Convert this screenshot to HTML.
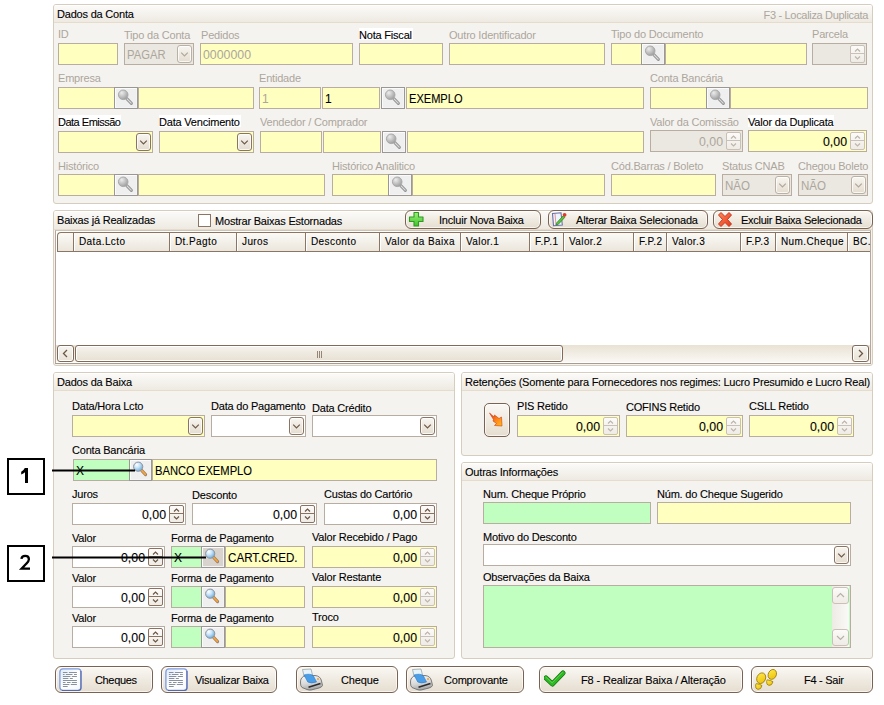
<!DOCTYPE html><html><head><meta charset="utf-8"><style>
*{margin:0;padding:0;box-sizing:border-box}
html,body{width:884px;height:705px;overflow:hidden;background:#fff;font-family:"Liberation Sans",sans-serif}
.t{position:absolute;white-space:nowrap;font-family:"Liberation Sans",sans-serif}
.k{-webkit-text-stroke:0.1px currentColor}
.b{position:absolute}
.grp{position:absolute;border:1px solid #d6cdbd;border-radius:3px;background:#f5f3ef;overflow:hidden;z-index:0}
.ghdr{position:absolute;left:0;top:0;right:0;border-top:1px solid #fff;border-bottom:1px solid #e6dccb;background:linear-gradient(#fbfaf8,#eeeae2)}
.dd{position:absolute;width:15px;height:18px;border:1px solid #7b6352;border-radius:3px;background:linear-gradient(#f8f6f1,#e4dccf);box-shadow:inset 0 0 0 1px rgba(255,255,255,0.75);z-index:3}
.dd svg{position:absolute;left:0;top:0}
.sp{position:absolute;width:15px;height:18px;border:1px solid #c9c1b8;border-radius:2px;background:linear-gradient(#fcfbf9,#efebe5);z-index:3}
.sp1{position:absolute;left:0;top:0;width:13px;height:8px;border-bottom:1px solid #c9c1b8}
.sb{position:absolute;border:1px solid #9b9794;box-shadow:inset 1px 1px 0 #fbfbfb,inset -1px -1px 0 #f4f4f4;z-index:3}
.sb svg{position:absolute;left:1px;top:0px}
.rb{position:absolute;border:1px solid #7a6352;border-radius:6px;background:linear-gradient(#faf8f4,#e5ddcf);box-shadow:inset 0 0 0 1px rgba(255,255,255,0.7);z-index:3}
.cb{position:absolute;width:13px;height:13px;border:1px solid #8b7565;background:#fff;z-index:3}
.grid{position:absolute;border:1px solid #b5a799;border-top-color:#cfc5b5;border-bottom-color:#a99b8d;background:#fff;z-index:2}
.ghrow{position:absolute;border:1px solid #8b7565;border-right:none;border-top-left-radius:4px;background:linear-gradient(#fbfaf6,#ebe6dc);z-index:3}
.gdiv{position:absolute;width:2px;height:18px;border-left:1px solid #8b7565;border-right:1px solid #fff;z-index:4}
.sbar{position:absolute;background:linear-gradient(#e9e2d4,#faf8f4);z-index:3}
.sbb{position:absolute;width:17px;height:17px;border:1px solid #806a5a;border-radius:3px;background:linear-gradient(#f7f5f0,#e8e1d6);box-shadow:inset 0 0 0 1px #fff;z-index:4}
.sbb svg,.vsbb svg{position:absolute;left:0;top:0}
.sbt{position:absolute;border:1px solid #806a5a;border-radius:3px;background:linear-gradient(#f6f3ed,#e7e0d3);box-shadow:inset 0 0 0 1px #fff;z-index:4}
.vsb{position:absolute;background:linear-gradient(90deg,#eeeae4,#fbfaf8);z-index:3}
.vsbb{position:absolute;width:17px;height:17px;border:1px solid #c9c1b8;border-radius:3px;background:linear-gradient(#fcfbf9,#efebe5);z-index:4}
.ann{position:absolute;width:38px;height:37px;border:2px solid #000;background:#fff;z-index:6}
.ln{position:absolute;left:0;top:0;z-index:10}
</style></head><body>
<div class="grp" style="left:53px;top:4px;width:820px;height:200px"><div class="ghdr" style="height:18px"></div></div>
<div class="t k" style="top:7.00px;font-size:11px;line-height:14px;color:#000;letter-spacing:-0.200px;left:57px;z-index:5;">Dados da Conta</div>
<div class="t" style="top:8.00px;font-size:11px;line-height:14px;color:#aca69d;letter-spacing:-0.315px;left:763.50px;z-index:5;">F3 - Localiza Duplicata</div>
<div class="t" style="top:27.00px;font-size:11px;line-height:14px;color:#aca69d;letter-spacing:-0.200px;left:58px;z-index:5;">ID</div>
<div class="t" style="top:28.00px;font-size:11px;line-height:14px;color:#aca69d;letter-spacing:-0.200px;left:124px;z-index:5;">Tipo da Conta</div>
<div class="t" style="top:28.00px;font-size:11px;line-height:14px;color:#aca69d;letter-spacing:-0.200px;left:201px;z-index:5;">Pedidos</div>
<div class="t k" style="top:28.00px;font-size:11px;line-height:14px;color:#000;letter-spacing:-0.200px;background:#fff;height:12px;padding-right:1px;left:359px;z-index:5;">Nota Fiscal</div>
<div class="t" style="top:28.00px;font-size:11px;line-height:14px;color:#aca69d;letter-spacing:-0.200px;left:449px;z-index:5;">Outro Identificador</div>
<div class="t" style="top:27.00px;font-size:11px;line-height:14px;color:#aca69d;letter-spacing:-0.200px;left:611px;z-index:5;">Tipo do Documento</div>
<div class="t" style="top:27.00px;font-size:11px;line-height:14px;color:#aca69d;letter-spacing:-0.200px;left:812px;z-index:5;">Parcela</div>
<div class="b" style="left:58px;top:43px;width:60px;height:22px;background:#ffffc0;border:1px solid #b9aca0;z-index:1;"></div>
<div class="b" style="left:124px;top:43px;width:70px;height:22px;background:#ebe8e1;border:1px solid #b9aca0;z-index:1;"></div>
<div class="dd" style="left:177px;top:45px;border-color:#b9b0a6"><svg width="13" height="16" viewBox="0 0 13 16"><path d="M3.2 6.6 L6.5 9.9 L9.8 6.6" fill="none" stroke="#b0a79d" stroke-width="1.25"/></svg></div>
<div class="t" style="top:47.50px;font-size:12px;line-height:15px;color:#aca69d;letter-spacing:0.000px;left:127px;z-index:5;transform:scaleX(0.9365);transform-origin:0 0;">PAGAR</div>
<div class="b" style="left:200px;top:43px;width:153px;height:22px;background:#ffffc0;border:1px solid #b9aca0;z-index:1;"></div>
<div class="t" style="top:47.50px;font-size:12px;line-height:15px;color:#aca69d;letter-spacing:0.000px;left:203px;z-index:5;transform:scaleX(1.0278);transform-origin:0 0;">0000000</div>
<div class="b" style="left:359px;top:43px;width:84px;height:22px;background:#ffffc0;border:1px solid #b9aca0;z-index:1;"></div>
<div class="b" style="left:449px;top:43px;width:156px;height:22px;background:#ffffc0;border:1px solid #b9aca0;z-index:1;"></div>
<div class="b" style="left:611px;top:43px;width:31px;height:22px;background:#ffffc0;border:1px solid #b9aca0;z-index:1;"></div>
<div class="sb" style="left:641px;top:43px;width:24px;height:22px;background:#efefef"><svg width="22" height="20" viewBox="0 0 22 20"><defs><radialGradient id="mg" cx="35%" cy="30%" r="75%"><stop offset="0" stop-color="#ececec"/><stop offset="1" stop-color="#9c9c9c"/></radialGradient></defs>
<path d="M10.8 10.6 L15.4 15.4" stroke="#949494" stroke-width="3" stroke-linecap="round"/><path d="M11 10.8 L15.2 15.2" stroke="#dcdcdc" stroke-width="1.1" stroke-linecap="round"/>
<circle cx="7.2" cy="6.8" r="4.8" fill="url(#mg)" stroke="#a6a6a6" stroke-width="0.9"/></svg></div>
<div class="b" style="left:665px;top:43px;width:142px;height:22px;background:#ffffc0;border:1px solid #b9aca0;z-index:1;"></div>
<div class="b" style="left:812px;top:43px;width:55px;height:22px;background:#ebe8e1;border:1px solid #b9aca0;z-index:1;"></div>
<div class="sp" style="left:850px;top:45px;border-color:#c9c1b8"><div class="sp1" style="border-bottom-color:#c9c1b8"></div><svg width="13" height="16" viewBox="0 0 13 16" style="position:absolute;left:0;top:0"><path d="M4 5.5 L6.5 3 L9 5.5" fill="none" stroke="#bdb5ab" stroke-width="1.2"/><path d="M4 10.5 L6.5 13 L9 10.5" fill="none" stroke="#bdb5ab" stroke-width="1.2"/></svg></div>
<div class="t" style="top:71.00px;font-size:11px;line-height:14px;color:#aca69d;letter-spacing:-0.200px;left:58px;z-index:5;">Empresa</div>
<div class="t" style="top:71.00px;font-size:11px;line-height:14px;color:#aca69d;letter-spacing:-0.200px;left:259px;z-index:5;">Entidade</div>
<div class="t" style="top:71.00px;font-size:11px;line-height:14px;color:#aca69d;letter-spacing:-0.200px;left:650px;z-index:5;">Conta Bancária</div>
<div class="b" style="left:58px;top:87px;width:57px;height:22px;background:#ffffc0;border:1px solid #b9aca0;z-index:1;"></div>
<div class="sb" style="left:114px;top:87px;width:24px;height:22px;background:#efefef"><svg width="22" height="20" viewBox="0 0 22 20"><defs><radialGradient id="mg" cx="35%" cy="30%" r="75%"><stop offset="0" stop-color="#ececec"/><stop offset="1" stop-color="#9c9c9c"/></radialGradient></defs>
<path d="M10.8 10.6 L15.4 15.4" stroke="#949494" stroke-width="3" stroke-linecap="round"/><path d="M11 10.8 L15.2 15.2" stroke="#dcdcdc" stroke-width="1.1" stroke-linecap="round"/>
<circle cx="7.2" cy="6.8" r="4.8" fill="url(#mg)" stroke="#a6a6a6" stroke-width="0.9"/></svg></div>
<div class="b" style="left:138px;top:87px;width:116px;height:22px;background:#ffffc0;border:1px solid #b9aca0;z-index:1;"></div>
<div class="b" style="left:259px;top:87px;width:62px;height:22px;background:#ffffc0;border:1px solid #b9aca0;z-index:1;"></div>
<div class="t" style="top:91.50px;font-size:12px;line-height:15px;color:#aca69d;letter-spacing:0.000px;left:262px;z-index:5;">1</div>
<div class="b" style="left:322px;top:87px;width:58px;height:22px;background:#ffffc0;border:1px solid #b9aca0;z-index:1;"></div>
<div class="t k" style="top:91.50px;font-size:12px;line-height:15px;color:#000;letter-spacing:0.000px;left:325px;z-index:5;">1</div>
<div class="sb" style="left:381px;top:87px;width:24px;height:22px;background:#efefef"><svg width="22" height="20" viewBox="0 0 22 20"><defs><radialGradient id="mg" cx="35%" cy="30%" r="75%"><stop offset="0" stop-color="#ececec"/><stop offset="1" stop-color="#9c9c9c"/></radialGradient></defs>
<path d="M10.8 10.6 L15.4 15.4" stroke="#949494" stroke-width="3" stroke-linecap="round"/><path d="M11 10.8 L15.2 15.2" stroke="#dcdcdc" stroke-width="1.1" stroke-linecap="round"/>
<circle cx="7.2" cy="6.8" r="4.8" fill="url(#mg)" stroke="#a6a6a6" stroke-width="0.9"/></svg></div>
<div class="b" style="left:406px;top:87px;width:238px;height:22px;background:#ffffc0;border:1px solid #b9aca0;z-index:1;"></div>
<div class="t k" style="top:91.50px;font-size:12px;line-height:15px;color:#000;letter-spacing:0.000px;left:409px;z-index:5;transform:scaleX(0.9224);transform-origin:0 0;">EXEMPLO</div>
<div class="b" style="left:650px;top:87px;width:57px;height:22px;background:#ffffc0;border:1px solid #b9aca0;z-index:1;"></div>
<div class="sb" style="left:706px;top:87px;width:24px;height:22px;background:#efefef"><svg width="22" height="20" viewBox="0 0 22 20"><defs><radialGradient id="mg" cx="35%" cy="30%" r="75%"><stop offset="0" stop-color="#ececec"/><stop offset="1" stop-color="#9c9c9c"/></radialGradient></defs>
<path d="M10.8 10.6 L15.4 15.4" stroke="#949494" stroke-width="3" stroke-linecap="round"/><path d="M11 10.8 L15.2 15.2" stroke="#dcdcdc" stroke-width="1.1" stroke-linecap="round"/>
<circle cx="7.2" cy="6.8" r="4.8" fill="url(#mg)" stroke="#a6a6a6" stroke-width="0.9"/></svg></div>
<div class="b" style="left:730px;top:87px;width:138px;height:22px;background:#ffffc0;border:1px solid #b9aca0;z-index:1;"></div>
<div class="t k" style="top:115.00px;font-size:11px;line-height:14px;color:#000;letter-spacing:-0.500px;background:#fff;height:12px;padding-right:1px;left:58px;z-index:5;">Data Emissão</div>
<div class="t k" style="top:115.00px;font-size:11px;line-height:14px;color:#000;letter-spacing:-0.200px;background:#fff;height:12px;padding-right:1px;left:159px;z-index:5;">Data Vencimento</div>
<div class="t" style="top:115.00px;font-size:11px;line-height:14px;color:#aca69d;letter-spacing:-0.200px;left:260px;z-index:5;">Vendedor / Comprador</div>
<div class="t" style="top:115.00px;font-size:11px;line-height:14px;color:#aca69d;letter-spacing:-0.200px;left:650px;z-index:5;">Valor da Comissão</div>
<div class="t k" style="top:115.00px;font-size:11px;line-height:14px;color:#000;letter-spacing:-0.200px;background:#fff;height:12px;padding-right:1px;left:748px;z-index:5;">Valor da Duplicata</div>
<div class="b" style="left:58px;top:131px;width:95px;height:22px;background:#ffffc0;border:1px solid #b9aca0;z-index:1;"></div>
<div class="dd" style="left:136px;top:133px;border-color:#8a7464"><svg width="13" height="16" viewBox="0 0 13 16"><path d="M3.2 6.6 L6.5 9.9 L9.8 6.6" fill="none" stroke="#6e5a4a" stroke-width="1.25"/></svg></div>
<div class="b" style="left:159px;top:131px;width:95px;height:22px;background:#ffffc0;border:1px solid #b9aca0;z-index:1;"></div>
<div class="dd" style="left:237px;top:133px;border-color:#8a7464"><svg width="13" height="16" viewBox="0 0 13 16"><path d="M3.2 6.6 L6.5 9.9 L9.8 6.6" fill="none" stroke="#6e5a4a" stroke-width="1.25"/></svg></div>
<div class="b" style="left:260px;top:131px;width:62px;height:22px;background:#ffffc0;border:1px solid #b9aca0;z-index:1;"></div>
<div class="b" style="left:323px;top:131px;width:58px;height:22px;background:#ffffc0;border:1px solid #b9aca0;z-index:1;"></div>
<div class="sb" style="left:382px;top:131px;width:24px;height:22px;background:#efefef"><svg width="22" height="20" viewBox="0 0 22 20"><defs><radialGradient id="mg" cx="35%" cy="30%" r="75%"><stop offset="0" stop-color="#ececec"/><stop offset="1" stop-color="#9c9c9c"/></radialGradient></defs>
<path d="M10.8 10.6 L15.4 15.4" stroke="#949494" stroke-width="3" stroke-linecap="round"/><path d="M11 10.8 L15.2 15.2" stroke="#dcdcdc" stroke-width="1.1" stroke-linecap="round"/>
<circle cx="7.2" cy="6.8" r="4.8" fill="url(#mg)" stroke="#a6a6a6" stroke-width="0.9"/></svg></div>
<div class="b" style="left:407px;top:131px;width:237px;height:22px;background:#ffffc0;border:1px solid #b9aca0;z-index:1;"></div>
<div class="b" style="left:650px;top:130px;width:93px;height:22px;background:#ebe8e1;border:1px solid #b9aca0;z-index:1;"></div>
<div class="sp" style="left:726px;top:132px;border-color:#c9c1b8"><div class="sp1" style="border-bottom-color:#c9c1b8"></div><svg width="13" height="16" viewBox="0 0 13 16" style="position:absolute;left:0;top:0"><path d="M4 5.5 L6.5 3 L9 5.5" fill="none" stroke="#bdb5ab" stroke-width="1.2"/><path d="M4 10.5 L6.5 13 L9 10.5" fill="none" stroke="#bdb5ab" stroke-width="1.2"/></svg></div>
<div class="t" style="top:134.50px;font-size:12px;line-height:15px;color:#aca69d;letter-spacing:0.000px;left:699.00px;z-index:5;transform:scaleX(1.0281);transform-origin:0 0;">0,00</div>
<div class="b" style="left:748px;top:130px;width:119px;height:22px;background:#ffffc0;border:1px solid #b9aca0;z-index:1;"></div>
<div class="sp" style="left:850px;top:132px;border-color:#c9c1b8"><div class="sp1" style="border-bottom-color:#c9c1b8"></div><svg width="13" height="16" viewBox="0 0 13 16" style="position:absolute;left:0;top:0"><path d="M4 5.5 L6.5 3 L9 5.5" fill="none" stroke="#bdb5ab" stroke-width="1.2"/><path d="M4 10.5 L6.5 13 L9 10.5" fill="none" stroke="#bdb5ab" stroke-width="1.2"/></svg></div>
<div class="t k" style="top:134.50px;font-size:12px;line-height:15px;color:#000;letter-spacing:0.000px;left:823.00px;z-index:5;transform:scaleX(1.0281);transform-origin:0 0;">0,00</div>
<div class="t" style="top:159.00px;font-size:11px;line-height:14px;color:#aca69d;letter-spacing:-0.200px;left:58px;z-index:5;">Histórico</div>
<div class="t" style="top:159.00px;font-size:11px;line-height:14px;color:#aca69d;letter-spacing:-0.200px;left:332px;z-index:5;">Histórico Analitico</div>
<div class="t" style="top:159.00px;font-size:11px;line-height:14px;color:#aca69d;letter-spacing:-0.200px;left:611px;z-index:5;">Cód.Barras / Boleto</div>
<div class="t" style="top:159.00px;font-size:11px;line-height:14px;color:#aca69d;letter-spacing:-0.200px;left:722px;z-index:5;">Status CNAB</div>
<div class="t" style="top:159.00px;font-size:11px;line-height:14px;color:#aca69d;letter-spacing:-0.200px;left:798px;z-index:5;">Chegou Boleto</div>
<div class="b" style="left:58px;top:174px;width:57px;height:22px;background:#ffffc0;border:1px solid #b9aca0;z-index:1;"></div>
<div class="sb" style="left:114px;top:174px;width:24px;height:22px;background:#efefef"><svg width="22" height="20" viewBox="0 0 22 20"><defs><radialGradient id="mg" cx="35%" cy="30%" r="75%"><stop offset="0" stop-color="#ececec"/><stop offset="1" stop-color="#9c9c9c"/></radialGradient></defs>
<path d="M10.8 10.6 L15.4 15.4" stroke="#949494" stroke-width="3" stroke-linecap="round"/><path d="M11 10.8 L15.2 15.2" stroke="#dcdcdc" stroke-width="1.1" stroke-linecap="round"/>
<circle cx="7.2" cy="6.8" r="4.8" fill="url(#mg)" stroke="#a6a6a6" stroke-width="0.9"/></svg></div>
<div class="b" style="left:138px;top:174px;width:187px;height:22px;background:#ffffc0;border:1px solid #b9aca0;z-index:1;"></div>
<div class="b" style="left:332px;top:174px;width:57px;height:22px;background:#ffffc0;border:1px solid #b9aca0;z-index:1;"></div>
<div class="sb" style="left:388px;top:174px;width:24px;height:22px;background:#efefef"><svg width="22" height="20" viewBox="0 0 22 20"><defs><radialGradient id="mg" cx="35%" cy="30%" r="75%"><stop offset="0" stop-color="#ececec"/><stop offset="1" stop-color="#9c9c9c"/></radialGradient></defs>
<path d="M10.8 10.6 L15.4 15.4" stroke="#949494" stroke-width="3" stroke-linecap="round"/><path d="M11 10.8 L15.2 15.2" stroke="#dcdcdc" stroke-width="1.1" stroke-linecap="round"/>
<circle cx="7.2" cy="6.8" r="4.8" fill="url(#mg)" stroke="#a6a6a6" stroke-width="0.9"/></svg></div>
<div class="b" style="left:412px;top:174px;width:193px;height:22px;background:#ffffc0;border:1px solid #b9aca0;z-index:1;"></div>
<div class="b" style="left:611px;top:174px;width:105px;height:22px;background:#ffffc0;border:1px solid #b9aca0;z-index:1;"></div>
<div class="b" style="left:722px;top:174px;width:70px;height:22px;background:#ebe8e1;border:1px solid #b9aca0;z-index:1;"></div>
<div class="dd" style="left:775px;top:176px;border-color:#b9b0a6"><svg width="13" height="16" viewBox="0 0 13 16"><path d="M3.2 6.6 L6.5 9.9 L9.8 6.6" fill="none" stroke="#b0a79d" stroke-width="1.25"/></svg></div>
<div class="t" style="top:178.50px;font-size:12px;line-height:15px;color:#aca69d;letter-spacing:0.000px;left:725px;z-index:5;transform:scaleX(0.9615);transform-origin:0 0;">NÃO</div>
<div class="b" style="left:798px;top:174px;width:70px;height:22px;background:#ebe8e1;border:1px solid #b9aca0;z-index:1;"></div>
<div class="dd" style="left:851px;top:176px;border-color:#b9b0a6"><svg width="13" height="16" viewBox="0 0 13 16"><path d="M3.2 6.6 L6.5 9.9 L9.8 6.6" fill="none" stroke="#b0a79d" stroke-width="1.25"/></svg></div>
<div class="t" style="top:178.50px;font-size:12px;line-height:15px;color:#aca69d;letter-spacing:0.000px;left:801px;z-index:5;transform:scaleX(0.9615);transform-origin:0 0;">NÃO</div>
<div class="grp" style="left:53px;top:210px;width:820px;height:156px"><div class="ghdr" style="height:19px"></div></div>
<div class="t k" style="top:213.00px;font-size:11px;line-height:14px;color:#000;letter-spacing:-0.200px;left:57px;z-index:5;">Baixas já Realizadas</div>
<div class="cb" style="left:198px;top:214px"></div>
<div class="t k" style="top:214.00px;font-size:11px;line-height:14px;color:#000;letter-spacing:-0.200px;left:215px;z-index:5;">Mostrar Baixas Estornadas</div>
<div class="rb" style="left:405px;top:210px;width:136px;height:19px"><svg width="18" height="18" viewBox="0 0 18 18" style="position:absolute;left:2px;top:0px"><defs><linearGradient id="pg" x1="0" y1="0" x2="0" y2="1"><stop offset="0" stop-color="#9ef07a"/><stop offset="1" stop-color="#3fc22a"/></linearGradient></defs>
<path d="M6 1.5 H10.5 V6 H15 V10.5 H10.5 V15 H6 V10.5 H1.5 V6 H6 Z" fill="url(#pg)" stroke="#2e9a22" stroke-width="1.1" stroke-linejoin="round"/></svg></div>
<div class="t k" style="top:213.00px;font-size:11px;line-height:14px;color:#000;letter-spacing:-0.217px;left:439px;z-index:6;">Incluir Nova Baixa</div>
<div class="rb" style="left:548px;top:210px;width:160px;height:19px"><svg width="20" height="18" viewBox="0 0 20 18" style="position:absolute;left:2px;top:1px">
<path d="M1.5 1.5 L10 0.8 L11.3 13 L2.5 13.7 Z" fill="#f0f4ff" stroke="#6870a8" stroke-width="1.1"/><path d="M4 2 L5 13" stroke="#e07060" stroke-width="0.7"/>
<path d="M5.5 11 L12.3 3.6 L14 5.2 L7.2 12.4 L5 12.9 Z" fill="#5cc43a" stroke="#2d7a20" stroke-width="0.7"/><circle cx="13.6" cy="2.8" r="1.9" fill="#e03a2a"/></svg></div>
<div class="t k" style="top:213.00px;font-size:11px;line-height:14px;color:#000;letter-spacing:-0.194px;left:576px;z-index:6;">Alterar Baixa Selecionada</div>
<div class="rb" style="left:713px;top:210px;width:160px;height:19px"><svg width="18" height="18" viewBox="0 0 18 18" style="position:absolute;left:1.5px;top:0px"><defs><linearGradient id="xg" x1="0" y1="0" x2="1" y2="1"><stop offset="0" stop-color="#ff8a5a"/><stop offset="1" stop-color="#e2361a"/></linearGradient></defs>
<path d="M2.5 4 L5 1.5 L9 5.5 L13 1.5 L15.5 4 L11.5 8.5 L15.5 13 L13 15.5 L9 11.5 L5 15.5 L2.5 13 L6.5 8.5 Z" fill="url(#xg)" stroke="#c22a14" stroke-width="0.9" stroke-linejoin="round"/></svg></div>
<div class="t k" style="top:213.00px;font-size:11px;line-height:14px;color:#000;letter-spacing:-0.260px;left:741px;z-index:6;">Excluir Baixa Selecionada</div>
<div class="grid" style="left:55px;top:230px;width:816px;height:134px"></div>
<div class="ghrow" style="left:57px;top:232px;width:813px;height:20px"></div>
<div class="gdiv" style="left:73px;top:233px"></div>
<div class="t k" style="top:235.50px;font-size:10px;line-height:12px;color:#000;letter-spacing:0.400px;left:79px;z-index:6;">Data.Lcto</div>
<div class="gdiv" style="left:169px;top:233px"></div>
<div class="t k" style="top:235.50px;font-size:10px;line-height:12px;color:#000;letter-spacing:0.400px;left:175px;z-index:6;">Dt.Pagto</div>
<div class="gdiv" style="left:236px;top:233px"></div>
<div class="t k" style="top:235.50px;font-size:10px;line-height:12px;color:#000;letter-spacing:0.400px;left:242px;z-index:6;">Juros</div>
<div class="gdiv" style="left:305px;top:233px"></div>
<div class="t k" style="top:235.50px;font-size:10px;line-height:12px;color:#000;letter-spacing:0.400px;left:311px;z-index:6;">Desconto</div>
<div class="gdiv" style="left:379px;top:233px"></div>
<div class="t k" style="top:235.50px;font-size:10px;line-height:12px;color:#000;letter-spacing:0.400px;left:385px;z-index:6;">Valor da Baixa</div>
<div class="gdiv" style="left:460px;top:233px"></div>
<div class="t k" style="top:235.50px;font-size:10px;line-height:12px;color:#000;letter-spacing:0.400px;left:466px;z-index:6;">Valor.1</div>
<div class="gdiv" style="left:529px;top:233px"></div>
<div class="t k" style="top:235.50px;font-size:10px;line-height:12px;color:#000;letter-spacing:0.400px;left:535px;z-index:6;">F.P.1</div>
<div class="gdiv" style="left:563px;top:233px"></div>
<div class="t k" style="top:235.50px;font-size:10px;line-height:12px;color:#000;letter-spacing:0.400px;left:569px;z-index:6;">Valor.2</div>
<div class="gdiv" style="left:633px;top:233px"></div>
<div class="t k" style="top:235.50px;font-size:10px;line-height:12px;color:#000;letter-spacing:0.400px;left:639px;z-index:6;">F.P.2</div>
<div class="gdiv" style="left:666px;top:233px"></div>
<div class="t k" style="top:235.50px;font-size:10px;line-height:12px;color:#000;letter-spacing:0.400px;left:672px;z-index:6;">Valor.3</div>
<div class="gdiv" style="left:740px;top:233px"></div>
<div class="t k" style="top:235.50px;font-size:10px;line-height:12px;color:#000;letter-spacing:0.400px;left:746px;z-index:6;">F.P.3</div>
<div class="gdiv" style="left:775px;top:233px"></div>
<div class="t k" style="top:235.50px;font-size:10px;line-height:12px;color:#000;letter-spacing:0.400px;left:781px;z-index:6;">Num.Cheque</div>
<div class="gdiv" style="left:847px;top:233px"></div>
<div class="t k" style="top:235.50px;font-size:10px;line-height:12px;color:#000;letter-spacing:0.400px;left:853px;z-index:6;">BC.</div>
<div class="sbar" style="left:56px;top:345px;width:814px;height:17px"></div>
<div class="sbb" style="left:57px;top:345px"><svg width="15" height="15" viewBox="0 0 15 15"><path d="M9 4 L5.5 7.5 L9 11" fill="none" stroke="#6b5545" stroke-width="1.3"/></svg></div>
<div class="sbt" style="left:75px;top:345px;width:488px;height:17px"><svg width="8" height="8" viewBox="0 0 8 8" style="position:absolute;left:240px;top:5px"><path d="M1.5 0V7M3.5 0V7M5.5 0V7" stroke="#8a7a6a" stroke-width="0.9"/></svg></div>
<div class="sbb" style="left:852px;top:345px"><svg width="15" height="15" viewBox="0 0 15 15"><path d="M6 4 L9.5 7.5 L6 11" fill="none" stroke="#6b5545" stroke-width="1.3"/></svg></div>
<div class="grp" style="left:53px;top:372px;width:402px;height:287px"><div class="ghdr" style="height:18px"></div></div>
<div class="t k" style="top:375.00px;font-size:11px;line-height:14px;color:#000;letter-spacing:-0.200px;left:57px;z-index:5;">Dados da Baixa</div>
<div class="t k" style="top:399.00px;font-size:11px;line-height:14px;color:#000;letter-spacing:-0.200px;left:72px;z-index:5;">Data/Hora Lcto</div>
<div class="t k" style="top:399.00px;font-size:11px;line-height:14px;color:#000;letter-spacing:-0.200px;left:211px;z-index:5;">Data do Pagamento</div>
<div class="t k" style="top:401.00px;font-size:11px;line-height:14px;color:#000;letter-spacing:-0.200px;left:312px;z-index:5;">Data Crédito</div>
<div class="b" style="left:72px;top:415px;width:133px;height:22px;background:#ffffc0;border:1px solid #b9aca0;z-index:1;"></div>
<div class="dd" style="left:188px;top:417px;border-color:#8a7464"><svg width="13" height="16" viewBox="0 0 13 16"><path d="M3.2 6.6 L6.5 9.9 L9.8 6.6" fill="none" stroke="#6e5a4a" stroke-width="1.25"/></svg></div>
<div class="b" style="left:211px;top:415px;width:95px;height:22px;background:#fff;border:1px solid #b9aca0;z-index:1;"></div>
<div class="dd" style="left:289px;top:417px;border-color:#8a7464"><svg width="13" height="16" viewBox="0 0 13 16"><path d="M3.2 6.6 L6.5 9.9 L9.8 6.6" fill="none" stroke="#6e5a4a" stroke-width="1.25"/></svg></div>
<div class="b" style="left:312px;top:415px;width:125px;height:22px;background:#fff;border:1px solid #b9aca0;z-index:1;"></div>
<div class="dd" style="left:420px;top:417px;border-color:#8a7464"><svg width="13" height="16" viewBox="0 0 13 16"><path d="M3.2 6.6 L6.5 9.9 L9.8 6.6" fill="none" stroke="#6e5a4a" stroke-width="1.25"/></svg></div>
<div class="t k" style="top:443.00px;font-size:11px;line-height:14px;color:#000;letter-spacing:-0.200px;left:72px;z-index:5;">Conta Bancária</div>
<div class="b" style="left:73px;top:459px;width:57px;height:22px;background:#c0ffc0;border:1px solid #b9aca0;z-index:1;"></div>
<div class="t k" style="top:463.50px;font-size:12px;line-height:15px;color:#000;letter-spacing:0.000px;left:76px;z-index:5;">X</div>
<div class="sb" style="left:129px;top:459px;width:23px;height:22px;background:#efefef"><svg width="22" height="20" viewBox="0 0 22 20"><defs><radialGradient id="mb" cx="35%" cy="30%" r="75%"><stop offset="0" stop-color="#ffffff"/><stop offset="0.45" stop-color="#c4e2f8"/><stop offset="1" stop-color="#6aa6d8"/></radialGradient></defs>
<path d="M10.6 10.4 L14.6 14.6" stroke="#9a7a5a" stroke-width="3" stroke-linecap="round"/><path d="M10.8 10.6 L14.4 14.4" stroke="#f7a640" stroke-width="1.6" stroke-linecap="round"/>
<circle cx="7.2" cy="6.7" r="4.6" fill="url(#mb)" stroke="#8d949c" stroke-width="1"/></svg></div>
<div class="b" style="left:152px;top:459px;width:285px;height:22px;background:#ffffc0;border:1px solid #b9aca0;z-index:1;"></div>
<div class="t k" style="top:463.50px;font-size:12px;line-height:15px;color:#000;letter-spacing:0.000px;left:155px;z-index:5;transform:scaleX(0.9327);transform-origin:0 0;">BANCO EXEMPLO</div>
<div class="t k" style="top:487.00px;font-size:11px;line-height:14px;color:#000;letter-spacing:-0.200px;left:72px;z-index:5;">Juros</div>
<div class="t k" style="top:488.00px;font-size:11px;line-height:14px;color:#000;letter-spacing:-0.200px;left:192px;z-index:5;">Desconto</div>
<div class="t k" style="top:487.00px;font-size:11px;line-height:14px;color:#000;letter-spacing:-0.200px;left:324px;z-index:5;">Custas do Cartório</div>
<div class="b" style="left:72px;top:503px;width:114px;height:22px;background:#fff;border:1px solid #b9aca0;z-index:1;"></div>
<div class="sp" style="left:169px;top:505px;border-color:#8a7262"><div class="sp1" style="border-bottom-color:#8a7262"></div><svg width="13" height="16" viewBox="0 0 13 16" style="position:absolute;left:0;top:0"><path d="M4 5.5 L6.5 3 L9 5.5" fill="none" stroke="#6b5545" stroke-width="1.2"/><path d="M4 10.5 L6.5 13 L9 10.5" fill="none" stroke="#6b5545" stroke-width="1.2"/></svg></div>
<div class="t k" style="top:507.50px;font-size:12px;line-height:15px;color:#000;letter-spacing:0.000px;left:142.00px;z-index:5;transform:scaleX(1.0281);transform-origin:0 0;">0,00</div>
<div class="b" style="left:192px;top:503px;width:125px;height:22px;background:#fff;border:1px solid #b9aca0;z-index:1;"></div>
<div class="sp" style="left:300px;top:505px;border-color:#8a7262"><div class="sp1" style="border-bottom-color:#8a7262"></div><svg width="13" height="16" viewBox="0 0 13 16" style="position:absolute;left:0;top:0"><path d="M4 5.5 L6.5 3 L9 5.5" fill="none" stroke="#6b5545" stroke-width="1.2"/><path d="M4 10.5 L6.5 13 L9 10.5" fill="none" stroke="#6b5545" stroke-width="1.2"/></svg></div>
<div class="t k" style="top:507.50px;font-size:12px;line-height:15px;color:#000;letter-spacing:0.000px;left:273.00px;z-index:5;transform:scaleX(1.0281);transform-origin:0 0;">0,00</div>
<div class="b" style="left:324px;top:503px;width:113px;height:22px;background:#fff;border:1px solid #b9aca0;z-index:1;"></div>
<div class="sp" style="left:420px;top:505px;border-color:#8a7262"><div class="sp1" style="border-bottom-color:#8a7262"></div><svg width="13" height="16" viewBox="0 0 13 16" style="position:absolute;left:0;top:0"><path d="M4 5.5 L6.5 3 L9 5.5" fill="none" stroke="#6b5545" stroke-width="1.2"/><path d="M4 10.5 L6.5 13 L9 10.5" fill="none" stroke="#6b5545" stroke-width="1.2"/></svg></div>
<div class="t k" style="top:507.50px;font-size:12px;line-height:15px;color:#000;letter-spacing:0.000px;left:393.00px;z-index:5;transform:scaleX(1.0281);transform-origin:0 0;">0,00</div>
<div class="t k" style="top:531.00px;font-size:11px;line-height:14px;color:#000;letter-spacing:-0.200px;left:72px;z-index:5;">Valor</div>
<div class="t k" style="top:531.00px;font-size:11px;line-height:14px;color:#000;letter-spacing:-0.200px;left:171px;z-index:5;">Forma de Pagamento</div>
<div class="t k" style="top:530.00px;font-size:11px;line-height:14px;color:#000;letter-spacing:-0.200px;left:312px;z-index:5;">Valor Recebido / Pago</div>
<div class="b" style="left:72px;top:546px;width:93px;height:22px;background:#fff;border:1px solid #b9aca0;z-index:1;"></div>
<div class="sp" style="left:148px;top:548px;border-color:#8a7262"><div class="sp1" style="border-bottom-color:#8a7262"></div><svg width="13" height="16" viewBox="0 0 13 16" style="position:absolute;left:0;top:0"><path d="M4 5.5 L6.5 3 L9 5.5" fill="none" stroke="#6b5545" stroke-width="1.2"/><path d="M4 10.5 L6.5 13 L9 10.5" fill="none" stroke="#6b5545" stroke-width="1.2"/></svg></div>
<div class="t k" style="top:550.50px;font-size:12px;line-height:15px;color:#000;letter-spacing:0.000px;left:121.00px;z-index:5;transform:scaleX(1.0281);transform-origin:0 0;">0,00</div>
<div class="b" style="left:171px;top:546px;width:31px;height:22px;background:#c0ffc0;border:1px solid #b9aca0;z-index:1;"></div>
<div class="t k" style="top:550.50px;font-size:12px;line-height:15px;color:#000;letter-spacing:0.000px;left:174px;z-index:5;">X</div>
<div class="sb" style="left:201px;top:546px;width:24px;height:22px;background:#d9d3cd"><svg width="22" height="20" viewBox="0 0 22 20"><defs><radialGradient id="mb" cx="35%" cy="30%" r="75%"><stop offset="0" stop-color="#ffffff"/><stop offset="0.45" stop-color="#c4e2f8"/><stop offset="1" stop-color="#6aa6d8"/></radialGradient></defs>
<path d="M10.6 10.4 L14.6 14.6" stroke="#9a7a5a" stroke-width="3" stroke-linecap="round"/><path d="M10.8 10.6 L14.4 14.4" stroke="#f7a640" stroke-width="1.6" stroke-linecap="round"/>
<circle cx="7.2" cy="6.7" r="4.6" fill="url(#mb)" stroke="#8d949c" stroke-width="1"/></svg></div>
<div class="b" style="left:225px;top:546px;width:80px;height:22px;background:#ffffc0;border:1px solid #b9aca0;z-index:1;"></div>
<div class="t k" style="top:550.50px;font-size:12px;line-height:15px;color:#000;letter-spacing:0.000px;left:228px;z-index:5;transform:scaleX(0.9680);transform-origin:0 0;">CART.CRED.</div>
<div class="b" style="left:312px;top:546px;width:125px;height:22px;background:#ffffc0;border:1px solid #b9aca0;z-index:1;"></div>
<div class="sp" style="left:420px;top:548px;border-color:#c9c1b8"><div class="sp1" style="border-bottom-color:#c9c1b8"></div><svg width="13" height="16" viewBox="0 0 13 16" style="position:absolute;left:0;top:0"><path d="M4 5.5 L6.5 3 L9 5.5" fill="none" stroke="#bdb5ab" stroke-width="1.2"/><path d="M4 10.5 L6.5 13 L9 10.5" fill="none" stroke="#bdb5ab" stroke-width="1.2"/></svg></div>
<div class="t k" style="top:550.50px;font-size:12px;line-height:15px;color:#000;letter-spacing:0.000px;left:393.00px;z-index:5;transform:scaleX(1.0281);transform-origin:0 0;">0,00</div>
<div class="t k" style="top:571.00px;font-size:11px;line-height:14px;color:#000;letter-spacing:-0.200px;left:72px;z-index:5;">Valor</div>
<div class="t k" style="top:571.00px;font-size:11px;line-height:14px;color:#000;letter-spacing:-0.200px;left:171px;z-index:5;">Forma de Pagamento</div>
<div class="t k" style="top:570.00px;font-size:11px;line-height:14px;color:#000;letter-spacing:-0.200px;left:312px;z-index:5;">Valor Restante</div>
<div class="b" style="left:72px;top:586px;width:93px;height:22px;background:#fff;border:1px solid #b9aca0;z-index:1;"></div>
<div class="sp" style="left:148px;top:588px;border-color:#8a7262"><div class="sp1" style="border-bottom-color:#8a7262"></div><svg width="13" height="16" viewBox="0 0 13 16" style="position:absolute;left:0;top:0"><path d="M4 5.5 L6.5 3 L9 5.5" fill="none" stroke="#6b5545" stroke-width="1.2"/><path d="M4 10.5 L6.5 13 L9 10.5" fill="none" stroke="#6b5545" stroke-width="1.2"/></svg></div>
<div class="t k" style="top:590.50px;font-size:12px;line-height:15px;color:#000;letter-spacing:0.000px;left:121.00px;z-index:5;transform:scaleX(1.0281);transform-origin:0 0;">0,00</div>
<div class="b" style="left:171px;top:586px;width:31px;height:22px;background:#c0ffc0;border:1px solid #b9aca0;z-index:1;"></div>
<div class="sb" style="left:201px;top:586px;width:24px;height:22px;background:#efefef"><svg width="22" height="20" viewBox="0 0 22 20"><defs><radialGradient id="mb" cx="35%" cy="30%" r="75%"><stop offset="0" stop-color="#ffffff"/><stop offset="0.45" stop-color="#c4e2f8"/><stop offset="1" stop-color="#6aa6d8"/></radialGradient></defs>
<path d="M10.6 10.4 L14.6 14.6" stroke="#9a7a5a" stroke-width="3" stroke-linecap="round"/><path d="M10.8 10.6 L14.4 14.4" stroke="#f7a640" stroke-width="1.6" stroke-linecap="round"/>
<circle cx="7.2" cy="6.7" r="4.6" fill="url(#mb)" stroke="#8d949c" stroke-width="1"/></svg></div>
<div class="b" style="left:225px;top:586px;width:80px;height:22px;background:#ffffc0;border:1px solid #b9aca0;z-index:1;"></div>
<div class="b" style="left:312px;top:586px;width:125px;height:22px;background:#ffffc0;border:1px solid #b9aca0;z-index:1;"></div>
<div class="sp" style="left:420px;top:588px;border-color:#c9c1b8"><div class="sp1" style="border-bottom-color:#c9c1b8"></div><svg width="13" height="16" viewBox="0 0 13 16" style="position:absolute;left:0;top:0"><path d="M4 5.5 L6.5 3 L9 5.5" fill="none" stroke="#bdb5ab" stroke-width="1.2"/><path d="M4 10.5 L6.5 13 L9 10.5" fill="none" stroke="#bdb5ab" stroke-width="1.2"/></svg></div>
<div class="t k" style="top:590.50px;font-size:12px;line-height:15px;color:#000;letter-spacing:0.000px;left:393.00px;z-index:5;transform:scaleX(1.0281);transform-origin:0 0;">0,00</div>
<div class="t k" style="top:611.00px;font-size:11px;line-height:14px;color:#000;letter-spacing:-0.200px;left:72px;z-index:5;">Valor</div>
<div class="t k" style="top:611.00px;font-size:11px;line-height:14px;color:#000;letter-spacing:-0.200px;left:171px;z-index:5;">Forma de Pagamento</div>
<div class="t k" style="top:610.00px;font-size:11px;line-height:14px;color:#000;letter-spacing:-0.200px;left:312px;z-index:5;">Troco</div>
<div class="b" style="left:72px;top:626px;width:93px;height:22px;background:#fff;border:1px solid #b9aca0;z-index:1;"></div>
<div class="sp" style="left:148px;top:628px;border-color:#8a7262"><div class="sp1" style="border-bottom-color:#8a7262"></div><svg width="13" height="16" viewBox="0 0 13 16" style="position:absolute;left:0;top:0"><path d="M4 5.5 L6.5 3 L9 5.5" fill="none" stroke="#6b5545" stroke-width="1.2"/><path d="M4 10.5 L6.5 13 L9 10.5" fill="none" stroke="#6b5545" stroke-width="1.2"/></svg></div>
<div class="t k" style="top:630.50px;font-size:12px;line-height:15px;color:#000;letter-spacing:0.000px;left:121.00px;z-index:5;transform:scaleX(1.0281);transform-origin:0 0;">0,00</div>
<div class="b" style="left:171px;top:626px;width:31px;height:22px;background:#c0ffc0;border:1px solid #b9aca0;z-index:1;"></div>
<div class="sb" style="left:201px;top:626px;width:24px;height:22px;background:#efefef"><svg width="22" height="20" viewBox="0 0 22 20"><defs><radialGradient id="mb" cx="35%" cy="30%" r="75%"><stop offset="0" stop-color="#ffffff"/><stop offset="0.45" stop-color="#c4e2f8"/><stop offset="1" stop-color="#6aa6d8"/></radialGradient></defs>
<path d="M10.6 10.4 L14.6 14.6" stroke="#9a7a5a" stroke-width="3" stroke-linecap="round"/><path d="M10.8 10.6 L14.4 14.4" stroke="#f7a640" stroke-width="1.6" stroke-linecap="round"/>
<circle cx="7.2" cy="6.7" r="4.6" fill="url(#mb)" stroke="#8d949c" stroke-width="1"/></svg></div>
<div class="b" style="left:225px;top:626px;width:80px;height:22px;background:#ffffc0;border:1px solid #b9aca0;z-index:1;"></div>
<div class="b" style="left:312px;top:626px;width:125px;height:22px;background:#ffffc0;border:1px solid #b9aca0;z-index:1;"></div>
<div class="sp" style="left:420px;top:628px;border-color:#c9c1b8"><div class="sp1" style="border-bottom-color:#c9c1b8"></div><svg width="13" height="16" viewBox="0 0 13 16" style="position:absolute;left:0;top:0"><path d="M4 5.5 L6.5 3 L9 5.5" fill="none" stroke="#bdb5ab" stroke-width="1.2"/><path d="M4 10.5 L6.5 13 L9 10.5" fill="none" stroke="#bdb5ab" stroke-width="1.2"/></svg></div>
<div class="t k" style="top:630.50px;font-size:12px;line-height:15px;color:#000;letter-spacing:0.000px;left:393.00px;z-index:5;transform:scaleX(1.0281);transform-origin:0 0;">0,00</div>
<div class="grp" style="left:461px;top:372px;width:412px;height:84px"><div class="ghdr" style="height:18px"></div></div>
<div class="t k" style="top:375.00px;font-size:11px;line-height:14px;color:#000;letter-spacing:-0.200px;left:465px;z-index:5;">Retenções (Somente para Fornecedores nos regimes: Lucro Presumido e Lucro Real)</div>
<div class="rb" style="left:484px;top:403px;width:26px;height:34px;border-radius:5px"><svg width="20" height="18" viewBox="0 0 20 18" style="position:absolute;left:3px;top:8px"><defs><linearGradient id="fg" x1="0" y1="0" x2="1" y2="1"><stop offset="0" stop-color="#e83a10"/><stop offset="0.6" stop-color="#ff8a1a"/><stop offset="1" stop-color="#ffc21a"/></linearGradient></defs>
<path d="M1.5 1 L6 5 L6.5 3 L11 6.5 L13.5 5 L14 14 L6.5 13.5 L8.5 11.5 L5 9 L5.5 7.5 Z" fill="url(#fg)" stroke="#d43a0a" stroke-width="0.6" stroke-linejoin="round"/></svg></div>
<div class="t k" style="top:399.00px;font-size:11px;line-height:14px;color:#000;letter-spacing:-0.200px;left:517px;z-index:5;">PIS Retido</div>
<div class="t k" style="top:400.00px;font-size:11px;line-height:14px;color:#000;letter-spacing:-0.200px;left:626px;z-index:5;">COFINS Retido</div>
<div class="t k" style="top:399.00px;font-size:11px;line-height:14px;color:#000;letter-spacing:-0.200px;left:749px;z-index:5;">CSLL Retido</div>
<div class="b" style="left:517px;top:415px;width:103px;height:22px;background:#ffffc0;border:1px solid #b9aca0;z-index:1;"></div>
<div class="sp" style="left:603px;top:417px;border-color:#c9c1b8"><div class="sp1" style="border-bottom-color:#c9c1b8"></div><svg width="13" height="16" viewBox="0 0 13 16" style="position:absolute;left:0;top:0"><path d="M4 5.5 L6.5 3 L9 5.5" fill="none" stroke="#bdb5ab" stroke-width="1.2"/><path d="M4 10.5 L6.5 13 L9 10.5" fill="none" stroke="#bdb5ab" stroke-width="1.2"/></svg></div>
<div class="t k" style="top:419.50px;font-size:12px;line-height:15px;color:#000;letter-spacing:0.000px;left:576.00px;z-index:5;transform:scaleX(1.0281);transform-origin:0 0;">0,00</div>
<div class="b" style="left:626px;top:415px;width:117px;height:22px;background:#ffffc0;border:1px solid #b9aca0;z-index:1;"></div>
<div class="sp" style="left:726px;top:417px;border-color:#c9c1b8"><div class="sp1" style="border-bottom-color:#c9c1b8"></div><svg width="13" height="16" viewBox="0 0 13 16" style="position:absolute;left:0;top:0"><path d="M4 5.5 L6.5 3 L9 5.5" fill="none" stroke="#bdb5ab" stroke-width="1.2"/><path d="M4 10.5 L6.5 13 L9 10.5" fill="none" stroke="#bdb5ab" stroke-width="1.2"/></svg></div>
<div class="t k" style="top:419.50px;font-size:12px;line-height:15px;color:#000;letter-spacing:0.000px;left:699.00px;z-index:5;transform:scaleX(1.0281);transform-origin:0 0;">0,00</div>
<div class="b" style="left:749px;top:415px;width:105px;height:22px;background:#ffffc0;border:1px solid #b9aca0;z-index:1;"></div>
<div class="sp" style="left:837px;top:417px;border-color:#c9c1b8"><div class="sp1" style="border-bottom-color:#c9c1b8"></div><svg width="13" height="16" viewBox="0 0 13 16" style="position:absolute;left:0;top:0"><path d="M4 5.5 L6.5 3 L9 5.5" fill="none" stroke="#bdb5ab" stroke-width="1.2"/><path d="M4 10.5 L6.5 13 L9 10.5" fill="none" stroke="#bdb5ab" stroke-width="1.2"/></svg></div>
<div class="t k" style="top:419.50px;font-size:12px;line-height:15px;color:#000;letter-spacing:0.000px;left:810.00px;z-index:5;transform:scaleX(1.0281);transform-origin:0 0;">0,00</div>
<div class="grp" style="left:461px;top:462px;width:412px;height:197px"><div class="ghdr" style="height:18px"></div></div>
<div class="t k" style="top:465.00px;font-size:11px;line-height:14px;color:#000;letter-spacing:-0.200px;left:465px;z-index:5;">Outras Informações</div>
<div class="t k" style="top:487.00px;font-size:11px;line-height:14px;color:#000;letter-spacing:-0.200px;left:483px;z-index:5;">Num. Cheque Próprio</div>
<div class="t k" style="top:487.00px;font-size:11px;line-height:14px;color:#000;letter-spacing:-0.200px;left:657px;z-index:5;">Núm. do Cheque Sugerido</div>
<div class="b" style="left:483px;top:502px;width:168px;height:22px;background:#c0ffc0;border:1px solid #b9aca0;z-index:1;"></div>
<div class="b" style="left:657px;top:502px;width:194px;height:22px;background:#ffffc0;border:1px solid #b9aca0;z-index:1;"></div>
<div class="t k" style="top:530.00px;font-size:11px;line-height:14px;color:#000;letter-spacing:-0.200px;left:483px;z-index:5;">Motivo do Desconto</div>
<div class="b" style="left:483px;top:544px;width:368px;height:22px;background:#fff;border:1px solid #b9aca0;z-index:1;"></div>
<div class="dd" style="left:834px;top:546px;border-color:#8a7464"><svg width="13" height="16" viewBox="0 0 13 16"><path d="M3.2 6.6 L6.5 9.9 L9.8 6.6" fill="none" stroke="#6e5a4a" stroke-width="1.25"/></svg></div>
<div class="t k" style="top:570.00px;font-size:11px;line-height:14px;color:#000;letter-spacing:-0.200px;left:483px;z-index:5;">Observações da Baixa</div>
<div class="b" style="left:483px;top:585px;width:368px;height:63px;background:#c0ffc0;border:1px solid #b9aca0;z-index:1;"></div>
<div class="vsb" style="left:832px;top:586px;width:17px;height:61px"></div>
<div class="vsbb" style="left:832px;top:587px"><svg width="15" height="15" viewBox="0 0 15 15"><path d="M4 9 L7.5 5.5 L11 9" fill="none" stroke="#b9b0a6" stroke-width="1.2"/></svg></div>
<div class="vsbb" style="left:832px;top:629px"><svg width="15" height="15" viewBox="0 0 15 15"><path d="M4 6 L7.5 9.5 L11 6" fill="none" stroke="#b9b0a6" stroke-width="1.2"/></svg></div>
<div class="rb" style="left:55px;top:666px;width:98px;height:27px"><svg width="24" height="24" viewBox="0 0 24 24" style="position:absolute;left:3px;top:1px"><defs><linearGradient id="dg" x1="0" y1="0" x2="1" y2="1"><stop offset="0" stop-color="#dfeafc"/><stop offset="0.5" stop-color="#ffffff"/><stop offset="1" stop-color="#f4f7ff"/></linearGradient></defs>
<rect x="0.9" y="0.9" width="21" height="21.4" rx="3" fill="url(#dg)" stroke="#7d9be0" stroke-width="1.3"/><path d="M22 3 V20 Q22 22.5 19.5 22.5 H3" fill="none" stroke="#5a68a8" stroke-width="1.1"/>
<path d="M3.9 4.5H8.5M9.9 4.5H17.9M3.9 6.5H5.6M6.8 6.5H13.5M15.0 6.5H17.9M3.9 8.5H11.4M12.8 8.5H17.9M3.9 10.5H9.4M10.8 10.5H13.8M3.9 12.5H17.9M3.9 14.5H6.5M8.0 14.5H11.6M12.8 14.5H17.9M3.9 16.5H10.4M11.8 16.5H17.9M3.9 18.5H8.7" stroke="#7c8494" stroke-width="0.9"/></svg></div>
<div class="t k" style="top:673.00px;font-size:11px;line-height:14px;color:#000;letter-spacing:-0.344px;left:95px;z-index:6;">Cheques</div>
<div class="rb" style="left:161px;top:666px;width:116px;height:27px"><svg width="24" height="24" viewBox="0 0 24 24" style="position:absolute;left:3px;top:1px"><defs><linearGradient id="dg" x1="0" y1="0" x2="1" y2="1"><stop offset="0" stop-color="#dfeafc"/><stop offset="0.5" stop-color="#ffffff"/><stop offset="1" stop-color="#f4f7ff"/></linearGradient></defs>
<rect x="0.9" y="0.9" width="21" height="21.4" rx="3" fill="url(#dg)" stroke="#7d9be0" stroke-width="1.3"/><path d="M22 3 V20 Q22 22.5 19.5 22.5 H3" fill="none" stroke="#5a68a8" stroke-width="1.1"/>
<path d="M3.9 4.5H8.5M9.9 4.5H17.9M3.9 6.5H5.6M6.8 6.5H13.5M15.0 6.5H17.9M3.9 8.5H11.4M12.8 8.5H17.9M3.9 10.5H9.4M10.8 10.5H13.8M3.9 12.5H17.9M3.9 14.5H6.5M8.0 14.5H11.6M12.8 14.5H17.9M3.9 16.5H10.4M11.8 16.5H17.9M3.9 18.5H8.7" stroke="#7c8494" stroke-width="0.9"/></svg></div>
<div class="t k" style="top:673.00px;font-size:11px;line-height:14px;color:#000;letter-spacing:-0.272px;left:195px;z-index:6;">Visualizar Baixa</div>
<div class="rb" style="left:296px;top:666px;width:102px;height:27px"><svg width="26" height="24" viewBox="0 0 26 24" style="position:absolute;left:1px;top:1px"><defs><linearGradient id="prg" x1="0" y1="0" x2="0.3" y2="1"><stop offset="0" stop-color="#fafafa"/><stop offset="0.6" stop-color="#d8d8d8"/><stop offset="1" stop-color="#a8a8a8"/></linearGradient></defs>
<path d="M4.5 1.5 L13 1 L14.5 7 L6 8 Z" fill="#e6f3fb" stroke="#8a9aa0" stroke-width="0.7"/>
<path d="M2.5 15 Q2 8.5 8 7.8 L17 7.5 Q22.5 8 23.5 13 L24.5 17.5 Q24 19 21 20 L13 22 Q11 22.3 9 21.5 L4 19.5 Q2.6 18.5 2.5 15 Z" fill="url(#prg)" stroke="#6e6e6e" stroke-width="0.9"/>
<path d="M6 7 Q12 5 15.5 8 L18.5 14 Q13 15.8 9.8 14 Z" fill="#4a9ee8" stroke="#2a78c8" stroke-width="0.6"/>
<path d="M10.5 19.3 L22.5 15.6" stroke="#2a2a2a" stroke-width="1.6"/><circle cx="20" cy="11" r="1" fill="#f5a030"/></svg></div>
<div class="t k" style="top:673.00px;font-size:11px;line-height:14px;color:#000;letter-spacing:-0.113px;left:341px;z-index:6;">Cheque</div>
<div class="rb" style="left:406px;top:666px;width:118px;height:27px"><svg width="26" height="24" viewBox="0 0 26 24" style="position:absolute;left:1px;top:1px"><defs><linearGradient id="prg" x1="0" y1="0" x2="0.3" y2="1"><stop offset="0" stop-color="#fafafa"/><stop offset="0.6" stop-color="#d8d8d8"/><stop offset="1" stop-color="#a8a8a8"/></linearGradient></defs>
<path d="M4.5 1.5 L13 1 L14.5 7 L6 8 Z" fill="#e6f3fb" stroke="#8a9aa0" stroke-width="0.7"/>
<path d="M2.5 15 Q2 8.5 8 7.8 L17 7.5 Q22.5 8 23.5 13 L24.5 17.5 Q24 19 21 20 L13 22 Q11 22.3 9 21.5 L4 19.5 Q2.6 18.5 2.5 15 Z" fill="url(#prg)" stroke="#6e6e6e" stroke-width="0.9"/>
<path d="M6 7 Q12 5 15.5 8 L18.5 14 Q13 15.8 9.8 14 Z" fill="#4a9ee8" stroke="#2a78c8" stroke-width="0.6"/>
<path d="M10.5 19.3 L22.5 15.6" stroke="#2a2a2a" stroke-width="1.6"/><circle cx="20" cy="11" r="1" fill="#f5a030"/></svg></div>
<div class="t k" style="top:673.00px;font-size:11px;line-height:14px;color:#000;letter-spacing:-0.206px;left:444px;z-index:6;">Comprovante</div>
<div class="rb" style="left:539px;top:666px;width:204px;height:27px"><svg width="26" height="22" viewBox="0 0 26 22" style="position:absolute;left:4px;top:3px"><path d="M2 8 L8.4 14 L19 3" fill="none" stroke="#157010" stroke-width="5" stroke-linecap="round" stroke-linejoin="round"/><path d="M2 8 L8.4 14 L19 3" fill="none" stroke="#2db824" stroke-width="3.6" stroke-linecap="round" stroke-linejoin="round"/><path d="M2 7.2 L8.2 12.8 L18.4 2.4" fill="none" stroke="#7fe070" stroke-width="0.8" stroke-linecap="round" opacity="0.8"/></svg></div>
<div class="t k" style="top:673.00px;font-size:11px;line-height:14px;color:#000;letter-spacing:-0.121px;left:581px;z-index:6;">F8 - Realizar Baixa / Alteração</div>
<div class="rb" style="left:751px;top:666px;width:122px;height:27px"><svg width="28" height="24" viewBox="0 0 28 24" style="position:absolute;left:0px;top:2px"><defs><linearGradient id="yg" x1="0" y1="0" x2="1" y2="1"><stop offset="0" stop-color="#ffec50"/><stop offset="1" stop-color="#ecbc00"/></linearGradient></defs>
<g fill="url(#yg)" stroke="#9a7a08" stroke-width="0.8"><ellipse cx="9.2" cy="9.2" rx="4.3" ry="5.5" transform="rotate(25 9.2 9.2)"/><path d="M4.2 14.6 Q8 15 10 16.6 Q9 20.6 6 20.4 Q3 20 3.6 16 Z"/>
<ellipse cx="20.3" cy="5.4" rx="4" ry="5.1" transform="rotate(25 20.3 5.4)"/><path d="M15.2 10.8 Q19 11.3 21 12.8 Q20 16.6 17 16.4 Q14.2 16 14.6 12.5 Z"/></g></svg></div>
<div class="t k" style="top:673.00px;font-size:11px;line-height:14px;color:#000;letter-spacing:-0.273px;left:804px;z-index:6;">F4 - Sair</div>
<div class="ann" style="left:7px;top:458px"></div>
<div class="ann" style="left:7px;top:545px"></div>
<svg class="ln" width="884" height="705" viewBox="0 0 884 705"><path d="M52 470.5 H135" stroke="#000" stroke-width="2"/><path d="M24.8 468 L28 468 L28 483 L25 483 L25 472.3 Q23.5 473.8 21.2 474.6 L21.2 471.8 Q23.6 470.6 24.8 468 Z" fill="#000"/><path d="M21.4 558.8 Q21.8 555.9 25.2 555.9 Q28.9 555.9 28.9 559.2 Q28.9 561.3 26.2 563.8 L21.6 568.7 H30" fill="none" stroke="#000" stroke-width="2.3"/><path d="M52 557.5 H206" stroke="#000" stroke-width="2"/></svg>
</body></html>
